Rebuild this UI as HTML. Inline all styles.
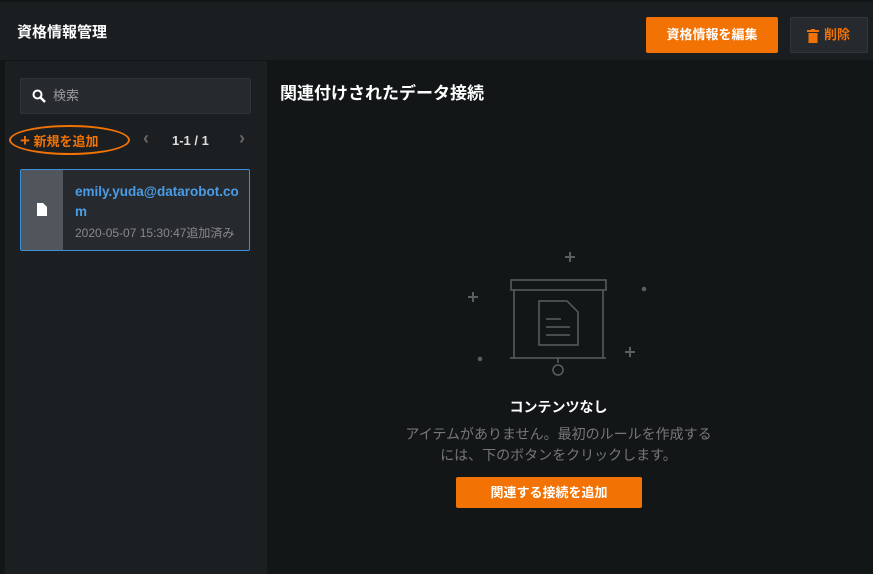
<!DOCTYPE html>
<html><head><meta charset="utf-8"><style>
*{margin:0;padding:0;box-sizing:border-box}
body{width:873px;height:574px;overflow:hidden;background:#121617;font-family:"Liberation Sans","Noto Sans CJK JP",sans-serif;position:relative}
.hdr{position:absolute;left:0;top:0;width:873px;height:60px;background:#1b1e21;border-top:2px solid #121617}
.hdr h1{position:absolute;left:17px;top:19px;font-size:15px;color:#fff;font-weight:bold}
.btn1{position:absolute;left:646px;top:15px;width:132px;height:36px;background:#f27204;border-radius:2px;color:#fff;font-size:13px;font-weight:bold;text-align:center;line-height:36px}
.btn2{position:absolute;left:790px;top:15px;width:78px;height:36px;background:#262a2e;border:1px solid #32363a;border-radius:2px;color:#f27204;font-size:13px;font-weight:bold;line-height:34px;padding-left:16px}
.side{position:absolute;left:5px;top:61px;width:262px;height:513px;background:#1b1f21}
.strip{position:absolute;left:0;top:61px;width:5px;height:354px;background:#121617}
.search{position:absolute;left:20px;top:78px;width:231px;height:36px;background:#262a2e;border:1px solid #30343a;border-radius:2px;color:#999;font-size:13px;line-height:34px;padding-left:32px}
.add{position:absolute;left:20px;top:131px;color:#f27204;font-size:13px;font-weight:bold}
.ell{position:absolute;left:9px;top:125px;width:121px;height:30px;border:2px solid #f27204;border-radius:50%}
.pg{position:absolute;left:172px;top:133px;color:#ddd;font-size:13px;font-weight:bold}
.ar{position:absolute;top:128px;color:#666;font-size:18px;font-weight:bold}
.card{position:absolute;left:20px;top:169px;width:230px;height:82px;border:1px solid #3c8fd8;background:#262a2e;border-radius:2px}
.card .ic{position:absolute;left:0;top:0;width:42px;height:80px;background:#50565b}
.card .em{position:absolute;left:54px;top:12px;color:#4a9de6;font-size:13.5px;font-weight:bold;line-height:20px;width:166px;word-break:break-all}
.card .dt{position:absolute;left:54px;top:54px;color:#888;font-size:12px;white-space:nowrap}
.title{position:absolute;left:280px;top:79px;color:#fff;font-size:17px;font-weight:bold}
.nc{position:absolute;left:0;width:873px;text-align:center}
.btn3{position:absolute;left:456px;top:477px;width:186px;height:31px;background:#f27204;border-radius:2px;color:#fff;font-size:13px;font-weight:bold;text-align:center;line-height:31px}
</style></head><body>
<div class="hdr"><h1>資格情報管理</h1>
<div class="btn1">資格情報を編集</div>
<div class="btn2"><svg width="12" height="14" style="position:absolute;left:16px;top:11px" viewBox="0 0 12 14"><rect x="0" y="1" width="12" height="2" fill="#f27204"/><rect x="4" y="0" width="4" height="2" fill="#f27204"/><path d="M1.5 4h9v10h-9z" fill="#f27204"/></svg><span style="margin-left:17px">削除</span></div>
</div>
<div class="strip"></div>
<div class="side"></div>
<div class="search"><svg width="14" height="14" style="position:absolute;left:11px;top:10px" viewBox="0 0 14 14"><circle cx="5.5" cy="5.5" r="4" stroke="#fff" stroke-width="2" fill="none"/><path d="M8.5 8.5L13 13" stroke="#fff" stroke-width="2.5"/></svg>検索</div>
<div class="ell"></div>
<div class="add"><span style="font-size:17px">+</span> 新規を追加</div>
<div class="ar" style="left:143px">‹</div>
<div class="pg">1-1 / 1</div>
<div class="ar" style="left:239px">›</div>
<div class="card"><div class="ic"><svg width="10" height="13" style="position:absolute;left:16px;top:33px" viewBox="0 0 10 13"><path d="M0 0h6l4 4v9H0z" fill="#fff"/></svg></div>
<div class="em">emily.yuda@datarobot.com</div>
<div class="dt">2020-05-07 15:30:47追加済み</div></div>
<div class="title">関連付けされたデータ接続</div>
<svg style="position:absolute;left:450px;top:240px" width="220" height="140" viewBox="0 0 220 140" fill="none" stroke="#5a5e62" stroke-width="1.5">
<path d="M120 12v10M115 17h10M23 52v10M18 57h10M180 107v10M175 112h10" stroke-width="2"/>
<circle cx="194" cy="49" r="1.5" fill="#5a5e62"/><circle cx="30" cy="119" r="1.5" fill="#5a5e62"/>
<rect x="61" y="40" width="95" height="10"/>
<path d="M64 50v68M153 50v68M60 118h96M108 118v5"/>
<circle cx="108" cy="130" r="5"/>
<path d="M89 61h28l11 11v33H89z"/>
<path d="M96 79h15M96 87h24M96 95h24"/>
</svg>
<div class="nc" style="left:122px;top:397px;color:#fff;font-size:14px;font-weight:bold">コンテンツなし</div>
<div class="nc" style="left:122px;top:424px;color:#777;font-size:14px;line-height:21px">アイテムがありません。最初のルールを作成する<br>には、下のボタンをクリックします。</div>
<div class="btn3">関連する接続を追加</div>
</body></html>
